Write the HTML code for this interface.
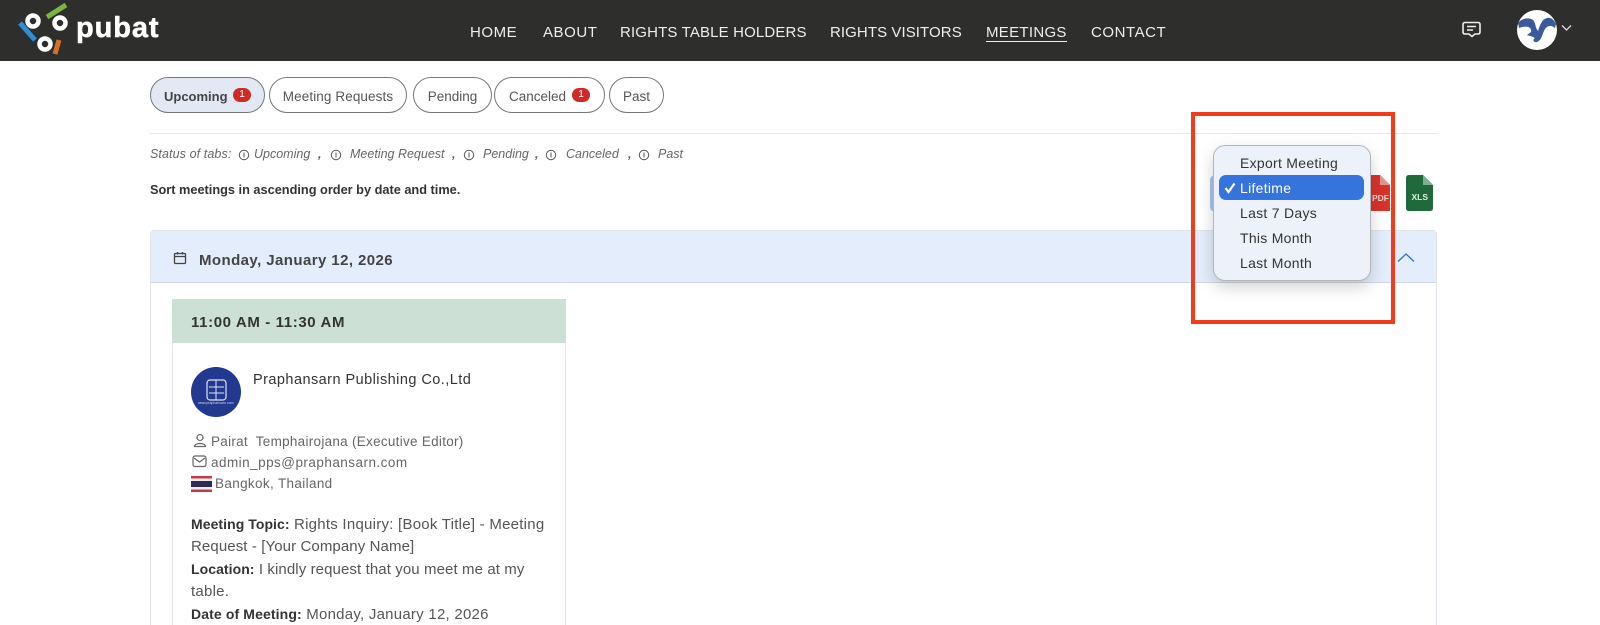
<!DOCTYPE html>
<html><head><meta charset="utf-8"><style>
html,body{margin:0;padding:0;background:#fff;width:1600px;height:625px;overflow:hidden}
#w{width:1600px;height:625px;position:relative;overflow:hidden;font-family:"Liberation Sans",sans-serif;color:#333}
.t{position:absolute;white-space:pre;line-height:20px}
.nav{color:#eee;font-size:15px;top:23px;letter-spacing:.55px}
.pill{position:absolute;top:77px;height:34px;border:1.5px solid #777;border-radius:19px;background:#fff;box-sizing:content-box;color:#555;font-size:13.5px;line-height:37px;text-align:center}
.badge{position:absolute;width:18px;height:14px;border-radius:8px;background:#cf2a27;color:#fff;font-size:10px;line-height:14px;text-align:center}
.st{font-size:12.5px;font-style:italic;color:#666;top:144px}
.m{font-size:14px;color:#333;left:1240px;letter-spacing:.28px}
svg{position:absolute;overflow:visible}
b{font-weight:bold;color:#333;font-size:14px;letter-spacing:.06px}
.g{font-size:13.5px;color:#666}
.b{font-size:15px;color:#555;left:191px;letter-spacing:.25px}
</style></head><body><div id="w">
<div style="position:absolute;left:0;top:0;width:1600px;height:61px;background:#2e2e2d"></div>
<svg style="left:0;top:0" width="170" height="61">
<g fill="none" stroke="#fff" stroke-width="4.500"><circle cx="33" cy="21" r="5.500"/><circle cx="60" cy="23" r="5.500"/><circle cx="45" cy="44" r="5.500"/></g>
<path d="M20 23L35 40" stroke="#2d8fd5" stroke-width="5"/><path d="M47 17L66 5" stroke="#7ab543" stroke-width="5"/><path d="M59 40L55 54" stroke="#d9702a" stroke-width="5"/>
</svg>
<div class="t" style="left:76px;top:10px;font-size:29px;line-height:36px;font-weight:bold;color:#fff;letter-spacing:.9px;-webkit-text-stroke:.5px #fff">pubat</div>
<div class="t nav" style="left:470px">HOME</div>
<div class="t nav" style="left:543px">ABOUT</div>
<div class="t nav" style="left:620px;letter-spacing:.15px">RIGHTS TABLE HOLDERS</div>
<div class="t nav" style="left:830px;letter-spacing:.08px">RIGHTS VISITORS</div>
<div class="t nav" style="left:986px;letter-spacing:.3px">MEETINGS</div>
<div style="position:absolute;left:986px;top:41px;width:81px;height:1px;background:#eee"></div>
<div class="t nav" style="left:1091px">CONTACT</div>
<svg style="left:1462px;top:21px" width="20" height="18" fill="none" stroke="#eee" stroke-width="1.600"><path d="M3 1.500H16Q18 1.500 18 3.500V11Q18 13 16 13H13L10 15.500L7 13H3Q1 13 1 11V3.500Q1 1.500 3 1.500Z"/><path d="M5 5.500H14M5 9H11"/></svg>
<svg style="left:1517px;top:10px" width="40" height="40"><circle cx="20" cy="20" r="20" fill="#fff"/><path d="M1 13C5 8 12 7 16 10C19 13 18 18 21 21C23 15 25 9 30 8C34 7 37 10 39 14L38 18C34 15 31 15 28 19C25 24 25 30 20 32C17 33 15 30 18 28C15 26 12 26 10 25L14 22C15 17 10 15 2 18Z" fill="#3a5a9d"/></svg>
<svg style="left:1561px;top:24px" width="11" height="8" fill="none" stroke="#ddd" stroke-width="1.300"><path d="M1 1.500L5.500 6L10 1.500"/></svg>

<div class="pill" style="left:150px;width:113px;background:#e2e9f5;font-weight:bold;font-size:13px;text-align:left;text-indent:13px;color:#444">Upcoming</div>
<div class="badge" style="left:233px;top:88px">1</div>
<div class="pill" style="left:269px;width:136px;letter-spacing:.1px">Meeting Requests</div>
<div class="pill" style="left:413px;width:77px">Pending</div>
<div class="pill" style="left:494px;width:109px;text-align:left;text-indent:14px">Canceled</div>
<div class="badge" style="left:572px;top:88px">1</div>
<div class="pill" style="left:609px;width:53px">Past</div>

<div style="position:absolute;left:150px;top:133px;width:1287px;height:1px;background:#e6e6e6"></div>
<div class="t st" style="left:150px;top:144px;letter-spacing:.1px">Status of tabs:</div>
<svg style="left:238px;top:149px" width="12" height="12" fill="none" stroke="#555"><circle cx="6" cy="6" r="4.700"/><path d="M6 3.500V8.500"/></svg>
<div class="t st" style="left:254px">Upcoming</div><div class="t st" style="left:318px;font-weight:bold">,</div>
<svg style="left:330px;top:149px" width="12" height="12" fill="none" stroke="#555"><circle cx="6" cy="6" r="4.700"/><path d="M6 3.500V8.500"/></svg>
<div class="t st" style="left:350px">Meeting Request</div><div class="t st" style="left:452px;font-weight:bold">,</div>
<svg style="left:463px;top:149px" width="12" height="12" fill="none" stroke="#555"><circle cx="6" cy="6" r="4.700"/><path d="M6 3.500V8.500"/></svg>
<div class="t st" style="left:483px">Pending</div><div class="t st" style="left:535px;font-weight:bold">,</div>
<svg style="left:545px;top:149px" width="12" height="12" fill="none" stroke="#555"><circle cx="6" cy="6" r="4.700"/><path d="M6 3.500V8.500"/></svg>
<div class="t st" style="left:566px">Canceled</div><div class="t st" style="left:628px;font-weight:bold">,</div>
<svg style="left:638px;top:149px" width="12" height="12" fill="none" stroke="#555"><circle cx="6" cy="6" r="4.700"/><path d="M6 3.500V8.500"/></svg>
<div class="t st" style="left:658px">Past</div>
<div class="t" style="left:150px;top:180px;font-size:12.750px;font-weight:bold;color:#333">Sort meetings in ascending order by date and time.</div>

<div style="position:absolute;left:1210px;top:175px;width:40px;height:37px;border-radius:5px;background:#aac4ea"></div>
<svg style="left:1355px;top:175px" width="36" height="36"><path d="M0 0H25L35 10V36H0Z" fill="#d8332c"/><path d="M25 0L35 10H25Z" fill="#e8928d"/><text x="17" y="26" font-size="8.500" font-weight="bold" fill="#f3d4d2" font-family="Liberation Sans">PDF</text></svg>
<svg style="left:1406px;top:175px" width="27" height="36"><path d="M3 0H17L27 10V33Q27 36 24 36H3Q0 36 0 33V3Q0 0 3 0Z" fill="#20693b"/><path d="M17 0L27 10H17Z" fill="#7fae90"/><text x="5.500" y="25" font-size="8.500" font-weight="bold" fill="#dfeee4" font-family="Liberation Sans">XLS</text></svg>

<div style="position:absolute;left:150px;top:230px;width:1287px;height:400px;border:1px solid #dfe3ea;border-radius:4px;box-sizing:border-box"></div>
<div style="position:absolute;left:151px;top:231px;width:1285px;height:52px;background:#e4edfb;border-bottom:1px solid #cfd8e6;box-sizing:border-box"></div>
<svg style="left:173px;top:251px" width="14" height="14" fill="none" stroke="#444" stroke-width="1.300"><rect x="1.500" y="2.500" width="11" height="10" rx="1"/><path d="M1.500 5.500H12.500M4.500 1V3.500M9.500 1V3.500"/></svg>
<div class="t" style="left:199px;top:251px;font-size:15px;font-weight:bold;color:#444;letter-spacing:.42px">Monday, January 12, 2026</div>
<svg style="left:1397px;top:252px" width="18" height="11" fill="none" stroke="#2f6fd0" stroke-width="1.300"><path d="M1 9.500L9 2L17 9.500"/></svg>

<div style="position:absolute;left:172px;top:299px;width:394px;height:340px;border:1px solid #e4e4e4;box-sizing:border-box"></div>
<div style="position:absolute;left:172px;top:299px;width:394px;height:44px;background:#cde0d5"></div>
<div class="t" style="left:191px;top:313px;font-size:15px;font-weight:bold;color:#333;letter-spacing:.62px">11:00 AM - 11:30 AM</div>
<svg style="left:191px;top:367px" width="50" height="50"><circle cx="25" cy="25" r="25" fill="#22398f"/><rect x="16" y="13" width="19" height="20" rx="3" fill="none" stroke="#dfe5f5" stroke-width="1.200"/><path d="M18 20H33M18 26H33M25 13V33" stroke="#dfe5f5" fill="none"/><text x="7" y="37" font-size="3.500" fill="#cfd6ee" font-family="Liberation Sans">www.praphansarn.com</text></svg>
<div class="t" style="left:253px;top:370px;font-size:14.500px;color:#333;letter-spacing:.45px">Praphansarn Publishing Co.,Ltd</div>
<svg style="left:193px;top:433px" width="14" height="15" fill="none" stroke="#666" stroke-width="1.200"><circle cx="7" cy="4.500" r="3"/><path d="M1.500 13.500C1.500 9.500 12.500 9.500 12.500 13.500Z"/></svg>
<div class="t g" style="left:211px;top:431.500px;letter-spacing:.28px">Pairat  Temphairojana (Executive Editor)</div>
<svg style="left:192px;top:455px" width="15" height="13" fill="none" stroke="#666" stroke-width="1.200"><rect x="1" y="1" width="13" height="10.500" rx="2"/><path d="M2 3L7.500 7L13 3"/></svg>
<div class="t g" style="left:211px;top:452.500px;letter-spacing:.47px">admin_pps@praphansarn.com</div>
<svg style="left:191px;top:476px" width="21" height="16"><rect width="21" height="16" fill="#c6394a"/><rect y="2.500" width="21" height="11" fill="#eee"/><rect y="5" width="21" height="6" fill="#2b2c55"/></svg>
<div class="t g" style="left:215px;top:473.500px;letter-spacing:.35px">Bangkok, Thailand</div>
<div class="t b" style="top:514px"><b>Meeting Topic:</b> Rights Inquiry: [Book Title] - Meeting</div>
<div class="t b" style="top:537px;letter-spacing:.1px">Request - [Your Company Name]</div>
<div class="t b" style="top:559px;letter-spacing:.1px"><b>Location:</b> I kindly request that you meet me at my</div>
<div class="t b" style="top:582px">table.</div>
<div class="t b" style="top:604px"><b style="letter-spacing:.12px">Date of Meeting:</b> Monday, January 12, 2026</div>

<div style="position:absolute;left:1191px;top:112px;width:204px;height:212px;border:4px solid #f03c1c;box-sizing:border-box"></div>
<div style="position:absolute;left:1213px;top:145px;width:158px;height:136px;border:1px solid #b5b5b8;border-radius:12px;box-sizing:border-box;background:#edf1fa;box-shadow:0 6px 16px rgba(0,0,0,.18)"></div>
<div style="position:absolute;left:1219px;top:175px;width:145px;height:25px;border-radius:7px;background:#3474dc"></div>
<div class="t m" style="top:153px">Export Meeting</div>
<svg style="left:1224px;top:182px" width="12" height="12" fill="none" stroke="#fff" stroke-width="2.200"><path d="M1.500 6L4.500 10L10.500 1.500"/></svg>
<div class="t m" style="top:178px;color:#fff">Lifetime</div>
<div class="t m" style="top:203px">Last 7 Days</div>
<div class="t m" style="top:228px">This Month</div>
<div class="t m" style="top:253px">Last Month</div>
</div></body></html>
